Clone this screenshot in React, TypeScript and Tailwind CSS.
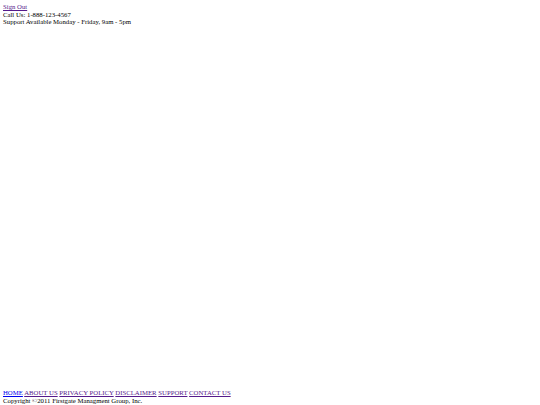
export default function App() {
  const links = [
    { label: "HOME", color: "text-[#0000ee]" },
    { label: "ABOUT US", color: "text-[#551a8b]" },
    { label: "PRIVACY POLICY", color: "text-[#551a8b]" },
    { label: "DISCLAIMER", color: "text-[#551a8b]" },
    { label: "SUPPORT", color: "text-[#551a8b]" },
    { label: "CONTACT US", color: "text-[#551a8b]" },
  ];

  return (
    <div className="flex h-[405px] flex-col justify-between bg-white px-[3px] pt-[3px] pb-[1px] font-['Liberation_Serif',serif] text-[6.75px] leading-[7.5px] text-black">
      <div>
        <a href="#" className="text-[#551a8b] underline">
          Sign Out
        </a>
        <div>Call Us: 1-888-123-4567</div>
        <div>Support Available Monday - Friday, 9am - 5pm</div>
      </div>

      <div>
        <div>
          {links.map((l, i) => (
            <span key={l.label}>
              <a href="#" className={`${l.color} underline`}>
                {l.label}
              </a>
              {i < links.length - 1 ? " " : ""}
            </span>
          ))}
        </div>
        <div>Copyright ©2011 Firstgate Managment Group, Inc.</div>
      </div>
    </div>
  );
}
